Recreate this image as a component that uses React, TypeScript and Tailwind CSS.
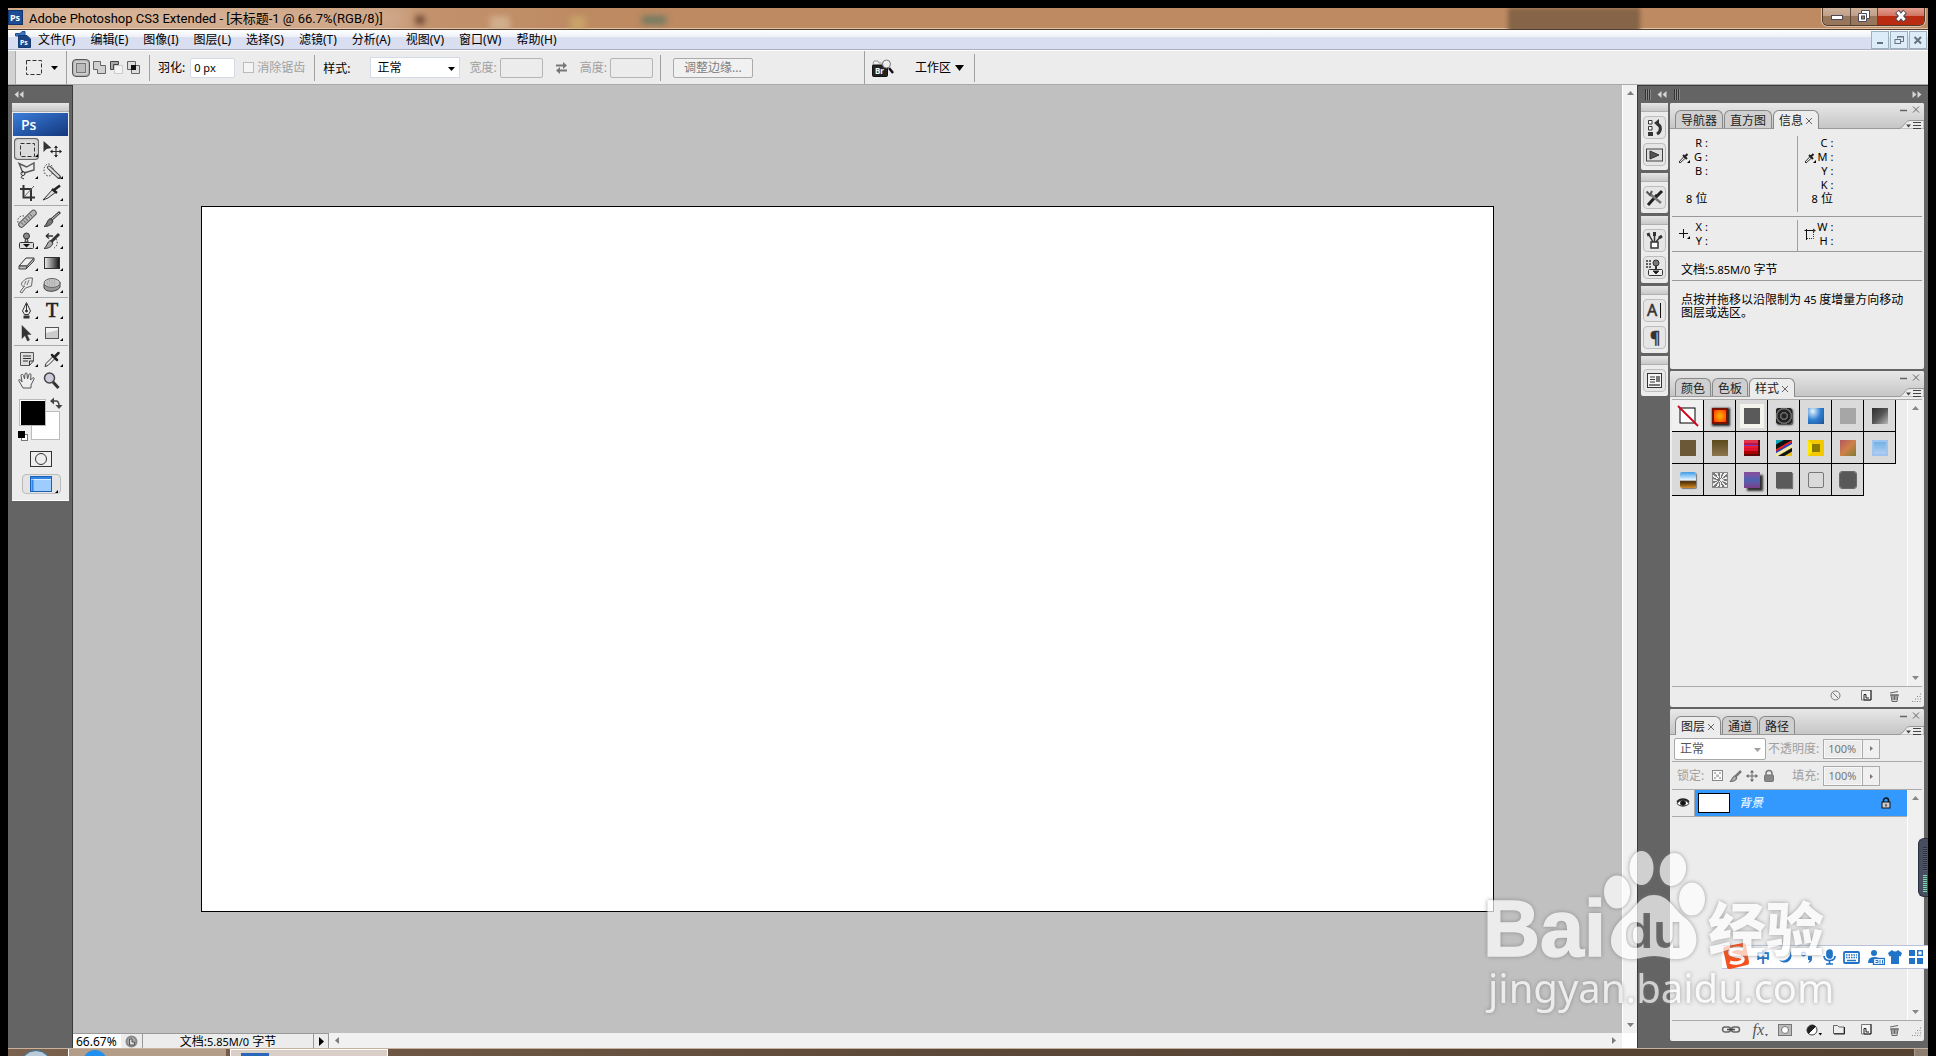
import React from 'react'
import clsx from 'clsx'

const menus = ['文件(F)', '编辑(E)', '图像(I)', '图层(L)', '选择(S)', '滤镜(T)', '分析(A)', '视图(V)', '窗口(W)', '帮助(H)']

type GlyphProps = { w: number, h: number, className?: string, children: React.ReactNode }

function Glyph({ w, h, className, children }: GlyphProps) {
  return (
    <svg width={w} height={h} viewBox={`0 0 ${w} ${h}`} className={clsx('shrink-0 overflow-visible', className)} fill="none" stroke="#333" aria-hidden="true">
      {children}
    </svg>
  )
}

function Triangle({ dir, className }: { dir: 'up' | 'down' | 'left' | 'right', className?: string }) {
  const paths = {
    up: 'M1 6L4.500 2L8 6Z',
    down: 'M1 3L4.500 7L8 3Z',
    left: 'M6 1L2 4.500L6 8Z',
    right: 'M3 1L7 4.500L3 8Z',
  }
  return (
    <svg width="9" height="9" viewBox="0 0 9 9" className={clsx('shrink-0', className)} fill="currentColor" aria-hidden="true">
      <path d={paths[dir]} />
    </svg>
  )
}

function Divider({ className }: { className?: string }) {
  return <span className={clsx('w-px shrink-0 bg-[#a0a0a0]', className)} />
}

/* ---------- title, menu and options bars ---------- */

function TitleBar() {
  return (
    <header className="relative flex h-[22px] shrink-0 items-center overflow-hidden border-b border-[#4e3d30] bg-gradient-to-r from-[#d2a888] via-[#bd8a62] via-30% to-[#bd8a62] shadow-[inset_0_-1px_0_#e3c3a6]">
      <span className="absolute top-1 left-4 h-3 w-96 bg-white/50 blur-md" />
      <span className="absolute top-2 left-[408px] h-2 w-2 bg-[#5f3a2a] blur-[3px]" />
      <span className="absolute top-2 left-[482px] h-4 w-5 bg-[#d6b795]/80 blur-[3px]" />
      <span className="absolute top-2 left-[562px] h-4 w-4 bg-[#d2b06d]/60 blur-[3px]" />
      <span className="absolute top-2 left-[634px] h-2 w-6 bg-[#6d7a62] blur-[3px]" />
      <span className="absolute top-0 right-72 h-6 w-[132px] bg-[#856447] blur-[2px]" />
      <svg className="relative mb-1 shrink-0" width="16" height="16" viewBox="0 0 16 16" aria-hidden="true">
        <rect x="0.500" y="1.500" width="14" height="14" fill="#1c4c96" stroke="#123468" />
        <text x="2" y="12" fontSize="9" fontWeight="700" fill="#fff" fontFamily="Noto Sans">Ps</text>
      </svg>
      <h1 className="relative ml-[5px] font-['Roboto','Noto_Sans_CJK_SC',sans-serif] text-[13px] leading-4 whitespace-nowrap">Adobe Photoshop CS3 Extended - [未标题-1 @ 66.7%(RGB/8)]</h1>
      <div className="relative mr-[3px] mb-[4px] ml-auto flex h-[18px] shrink-0 overflow-hidden rounded-b-md border border-t-0 border-[#4f3a2b] shadow-[0_0_0_1px_#dcc0a8]">
        <button aria-label="Minimize" className="flex w-7 items-center justify-center border-r border-[#5d4939] bg-gradient-to-b from-[#cdb19b] via-[#c0a088] via-45% to-[#97765c] to-50%">
          <Glyph w={14} h={12}><rect x="1.500" y="5.500" width="11" height="4" fill="#fff" stroke="#4a4a5a" /></Glyph>
        </button>
        <button aria-label="Restore" className="flex w-[27px] items-center justify-center border-r border-[#5d4939] bg-gradient-to-b from-[#cdb19b] via-[#c0a088] via-45% to-[#97765c] to-50%">
          <Glyph w={14} h={14}>
            <path d="M4.500 1.500H12.500V9.500H9.500V12.500H1.500V4.500H4.500Z" fill="#fff" stroke="#4a4a5a" />
            <rect x="4.500" y="7" width="3" height="3" fill="#9c7d65" stroke="#4a4a5a" />
            <path d="M5 4.500H9.500V9" stroke="#4a4a5a" />
          </Glyph>
        </button>
        <button aria-label="Close" className="flex w-[46px] items-center justify-center bg-gradient-to-b from-[#e2a090] via-[#d27462] via-45% to-[#b92c12] to-50%">
          <Glyph w={14} h={14}>
            <path d="M3 2.500L11 11.500M11 2.500L3 11.500" stroke="#4a4a5a" strokeWidth="5" />
            <path d="M3.500 3L10.500 11M10.500 3L3.500 11" stroke="#fff" strokeWidth="3" />
          </Glyph>
        </button>
      </div>
    </header>
  )
}

function MenuBar() {
  const box = 'flex h-[18px] w-[18px] items-center justify-center border border-[#9fb0bd] bg-[#dcecf8]'
  return (
    <nav className="flex h-5 shrink-0 items-center border-b border-[#a9b0c4] bg-gradient-to-b from-white via-[#eef1f8] via-35% to-[#d9dff0] to-40% pr-px pl-[7px]">
      <Glyph w={16} h={17}>
        <path d="M0.500 2.500H5L7 0.500H10V5H0.500Z" fill="#3f74bd" stroke="#1f4f97" />
        <path d="M3.500 4.500H12L15.500 8V16.500H3.500Z" fill="#1c4585" stroke="#173a70" />
        <text x="5" y="14" fontSize="7" fontWeight="700" fill="#fff" stroke="none" fontFamily="Noto Sans">Ps</text>
      </Glyph>
      <ul className="ml-[7px] flex gap-[15px] text-xs leading-4 whitespace-nowrap">
        {menus.map(m => <li key={m}><button>{m}</button></li>)}
      </ul>
      <div className="ml-auto flex gap-px">
        <button aria-label="Minimize document" className={box}>
          <Glyph w={10} h={10}><path d="M2 8H8" stroke="#66727d" strokeWidth="2" /></Glyph>
        </button>
        <button aria-label="Restore document" className={box}>
          <Glyph w={10} h={10}>
            <path d="M3.500 3.500V1.500H9.500V6.500H7M3 2H10" stroke="#66727d" />
            <rect x="1" y="4.500" width="5.500" height="4" stroke="#66727d" />
          </Glyph>
        </button>
        <button aria-label="Close document" className={box}>
          <Glyph w={10} h={10}><path d="M1.500 2L8 8.500M8 2L1.500 8.500" stroke="#66727d" strokeWidth="2" /></Glyph>
        </button>
      </div>
    </nav>
  )
}

function OptionsBar() {
  return (
    <div className="flex h-[35px] shrink-0 items-center border-t border-b border-t-white border-b-[#aaa] bg-[#ececec] text-xs leading-4 whitespace-nowrap">
      <span className="h-full w-2 border-r border-[#aaa] bg-[#d2d2d2]" />
      <button aria-label="Tool preset" className="ml-2 flex w-10 items-center gap-2 pl-[2px]">
        <Glyph w={16} h={15}><rect x="0.500" y="0.500" width="15" height="14" strokeDasharray="4 2" /></Glyph>
        <Triangle dir="down" />
      </button>
      <Divider className="ml-[2px] h-full" />
      <div className="ml-[5px] flex items-center">
        <button aria-label="New selection" className="flex h-[18px] w-[18px] items-center justify-center rounded border border-[#555] bg-[#cfcfcf] shadow-[inset_0_0_2px_#666]">
          <Glyph w={12} h={12}><rect x="1.500" y="1.500" width="9" height="9" fill="#bbb" stroke="#777" /></Glyph>
        </button>
        <button aria-label="Add to selection" className="ml-[2px]">
          <Glyph w={17} h={16}><path d="M1.500 1.500H8.500V5.500H13.500V13.500H5.500V9.500H1.500Z" fill="#d0d0d0" stroke="#666" /></Glyph>
        </button>
        <button aria-label="Subtract from selection">
          <Glyph w={17} h={16}>
            <rect x="5.500" y="5.500" width="8" height="8" fill="#f4f4f4" stroke="#ccc" />
            <path d="M1.500 9.500V1.500H9.500V4.500H4.500V9.500Z" fill="#aaa" stroke="#444" />
          </Glyph>
        </button>
        <button aria-label="Intersect with selection">
          <Glyph w={16} h={16}>
            <path d="M1.500 1.500H9.500V9.500H1.500ZM5.500 5.500H13.500V13.500H5.500Z" stroke="#666" fill="#ddd" />
            <rect x="5" y="5" width="5" height="5" fill="#111" stroke="none" />
          </Glyph>
        </button>
      </div>
      <Divider className="ml-[7px] h-[26px]" />
      <label htmlFor="feather" className="ml-2">羽化:</label>
      <input id="feather" defaultValue="0 px" className="ml-[5px] h-5 w-[45px] rounded-xs border border-[#d4dbe6] bg-white px-[3px] text-[11px]" />
      <label className="ml-2 flex items-center gap-[3px] text-[#a0a0a0]">
        <input type="checkbox" disabled className="h-[11px] w-[11px] appearance-none border border-[#bbb] bg-[#f4f4f4]" />
        消除锯齿
      </label>
      <Divider className="ml-[9px] h-[26px]" />
      <label htmlFor="style" className="ml-2 pt-[2px]">样式:</label>
      <div className="relative ml-5">
        <select id="style" className="block h-[21px] w-[90px] appearance-none border border-[#d4dbe6] bg-white pl-[6px] text-xs leading-4">
          <option>正常</option>
        </select>
        <Triangle dir="down" className="pointer-events-none absolute top-[7px] right-1" />
      </div>
      <label htmlFor="w" className="ml-[9px] text-[#a0a0a0]">宽度:</label>
      <input id="w" disabled className="ml-[3px] h-5 w-[43px] rounded-xs border border-[#b5b5b5] bg-[#ececec]" />
      <button aria-label="Swap width and height" className="ml-3">
        <Glyph w={13} h={12}>
          <path d="M1 3.500H9M4 8.500H12" stroke="#777" strokeWidth="2" />
          <path d="M8 0L12 3.500L8 7ZM5 5L1 8.500L5 12Z" fill="#777" stroke="none" />
        </Glyph>
      </button>
      <label htmlFor="h" className="ml-3 text-[#a0a0a0]">高度:</label>
      <input id="h" disabled className="ml-[3px] h-5 w-[43px] rounded-xs border border-[#b5b5b5] bg-[#ececec]" />
      <Divider className="ml-[7px] h-[26px]" />
      <button disabled className="ml-3 h-5 w-20 rounded-xs border border-[#aaa] bg-[#f1f1f1] text-[#808080]">调整边缘...</button>
      <Divider className="ml-[111px] h-full" />
      <button aria-label="Go to Bridge" className="ml-[7px]">
        <Glyph w={23} h={18}>
          <path d="M1 5L2 2H6L7 4H15V8H1Z" fill="#eee" stroke="#999" />
          <rect x="0.500" y="6" width="15" height="11.500" rx="1" fill="#222" stroke="#111" />
          <text x="3" y="15" fontSize="8" fontWeight="700" fill="#fff" stroke="none" fontFamily="Noto Sans">Br</text>
          <path d="M17 9L21 14" stroke="#111" strokeWidth="2.500" />
          <circle cx="14.500" cy="5" r="4" fill="#eee" stroke="#777" />
        </Glyph>
      </button>
      <button className="ml-5 flex items-center gap-[3px]">
        工作区
        <Glyph w={11} h={8}><path d="M1 1H10L5.500 7Z" fill="#000" stroke="none" /></Glyph>
      </button>
      <Divider className="ml-[9px] h-[28px]" />
    </div>
  )
}

/* ---------- tool box ---------- */

const tools: { name: string, art: React.ReactNode, flyout?: boolean, line?: boolean }[] = [
  { name: 'Marquee', flyout: true, art: <rect x="6.500" y="5.500" width="14" height="13" strokeDasharray="4 2" /> },
  {
    name: 'Move',
    art: (
      <>
        <path d="M4.500 3V14L7.500 11L12.500 10Z" fill="#333" stroke="none" />
        <path d="M12 13.500H22M17 8.500V18.500" strokeWidth="1.200" />
        <path d="M17 7.500L19 10H15ZM17 19.500L19 17H15ZM11 13.500L13.500 11.500V15.500ZM23 13.500L20.500 11.500V15.500Z" fill="#222" stroke="none" />
      </>
    ),
  },
  { name: 'Lasso', flyout: true, art: <><path d="M9 13L5 3.500L12.500 7L20 3V10L10 13" stroke="#555" strokeWidth="1.400" /><circle cx="9" cy="13.500" r="2" /><path d="M9 15L7 17.500L10 19" /></> },
  {
    name: 'Quick selection',
    flyout: true,
    art: (
      <>
        <ellipse cx="9.500" cy="10" rx="4.500" ry="6" strokeDasharray="1.500 1.500" />
        <path d="M10 7.500L20 17" stroke="#444" strokeWidth="4" strokeLinecap="round" />
        <path d="M10 7.500L19.500 16.500" stroke="#ddd" strokeWidth="2" strokeLinecap="round" />
      </>
    ),
  },
  { name: 'Crop', art: <><path d="M9.500 3V15.500H21M6 7H17V19" strokeWidth="2" /><path d="M10 15L20 4" stroke="#666" /></> },
  { name: 'Slice', flyout: true, art: <><path d="M4 18L14 7L17 10L9 16Z" fill="#ddd" /><path d="M13 7L18 11M15 8L21 3.500" stroke="#222" strokeWidth="2.500" /></> },
  {
    name: 'Healing brush',
    flyout: true,
    line: true,
    art: (
      <>
        <path d="M10 8A5 5 0 0 0 6 17" strokeDasharray="1.500 1.500" />
        <path d="M7.500 16.500L19.500 5" stroke="#555" strokeWidth="6.500" strokeLinecap="round" />
        <path d="M7.500 16.500L19.500 5" stroke="#bbb" strokeWidth="4.500" strokeLinecap="round" />
        <path d="M8 16L19 5.500" stroke="#666" strokeWidth="3" strokeDasharray="1 2" />
      </>
    ),
  },
  { name: 'Brush', flyout: true, art: <><path d="M12 12L21 4" strokeWidth="3" stroke="#444" /><path d="M12.500 11.500L20 5" stroke="#ccc" /><path d="M5 18.500C8 17 8 12 11 10.500L14 13C13 17 9 18.500 5 18.500Z" fill="#777" /></> },
  {
    name: 'Clone stamp',
    flyout: true,
    art: (
      <>
        <circle cx="12.500" cy="6" r="3" fill="#888" />
        <path d="M11.500 9L11 12H14L13.500 9Z" fill="#ccc" />
        <rect x="5.500" y="12.500" width="14" height="6" rx="1" fill="#ddd" />
        <path d="M9 14H16L12.500 17.500Z" fill="#111" stroke="none" />
      </>
    ),
  },
  { name: 'History brush', flyout: true, art: <><path d="M12 12L20 4" strokeWidth="3" /><path d="M5 18.500C8 17 8 12 11 10.500L14 13C13 17 9 18.500 5 18.500Z" fill="#aaa" /><path d="M17 9A6 6 0 0 1 15 18" strokeDasharray="1.500 1.500" /><path d="M7 6H14M7 6L10 3.500M7 6L10 8.500" strokeWidth="1.300" /></> },
  { name: 'Eraser', flyout: true, art: <><path d="M5 14L12 6H20L13 14Z" fill="#eee" /><path d="M5 14V17H12L20 9V6L13 14H5M13 14L12 17" fill="#bbb" stroke="#444" /></> },
  { name: 'Gradient', flyout: true, art: <rect x="5.500" y="5.500" width="15" height="11" fill="url(#toolGradient)" /> },
  { name: 'Smudge', flyout: true, art: <><path d="M6 18L10.500 12C7 13 6.500 9 9 7.500C11 4.500 15 3.500 18.500 4L17.500 12L11.500 14L8 19Z" fill="#e8e8e8" stroke="#666" /><path d="M12 7L10.500 10.500M15 6L13 11" stroke="#777" /></> },
  { name: 'Sponge', flyout: true, art: <><path d="M5 10V14C7 19 19 18 21 13V8Z" fill="#999" stroke="#444" /><ellipse cx="13" cy="9" rx="8" ry="4.500" fill="#c4c4c4" stroke="#666" /><path d="M8 9H18M10 7H16M10 11H16" stroke="#999" strokeDasharray="1 1.500" /></> },
  { name: 'Pen', flyout: true, line: true, art: <><path d="M12.500 2.500L16.500 11L14.500 14.500H10.500L8.500 11Z" fill="#eee" /><path d="M12.500 4V11" /><circle cx="12.500" cy="11" r="1" fill="#222" /><path d="M9.500 17H15.500" strokeWidth="3" /></> },
  { name: 'Type', flyout: true, art: <text x="7" y="17" fontSize="20" fontFamily="Liberation Serif" fill="#222" stroke="#222" strokeWidth="0.600">T</text> },
  { name: 'Path selection', flyout: true, art: <path d="M8 3.500V16.500L11 13.500L13.500 19L15.500 18L13 12.500H17Z" fill="#333" stroke="#333" strokeWidth="0.500" /> },
  { name: 'Rectangle', flyout: true, art: <><rect x="6.500" y="5.500" width="13" height="11" fill="#ccc" stroke="#555" /><path d="M7 16V11L19 8V6H7Z" fill="#f3f3f3" stroke="none" /></> },
  { name: 'Notes', flyout: true, line: true, art: <><path d="M6.500 4.500H19.500V13L15.500 17.500H6.500Z" fill="#ddd" stroke="#555" /><path d="M9 8H17M9 10.500H17M9 13H14" /><path d="M19.500 13H15.500V17.500" /></> },
  { name: 'Eyedropper', flyout: true, art: <><path d="M6 18.500L7 15.500L14 8.500L16 10.500L9 17.500Z" fill="#eee" /><path d="M13 7L18 12M15.500 9L19.500 5" stroke="#222" strokeWidth="2.500" strokeLinecap="round" /></> },
  { name: 'Hand', art: <path d="M9 18L5 11C4 9 6 9 7.500 11L8 12L7 5.500C7 4 9 4 9.500 5.500L10.500 9L11 4C11.500 2.500 13 2.500 13 4L13.500 9L15 4.500C15.500 3 17 3.500 17 5L16.500 10L18.500 8C19.500 7 20.500 8 20 9L17 15V18Z" fill="#eee" stroke="#555" /> },
  { name: 'Zoom', art: <><path d="M14 12L19.500 18" strokeWidth="3" stroke="#333" /><circle cx="10.500" cy="8" r="5" fill="#ccd" stroke="#444" strokeWidth="1.500" /></> },
]

const PanelGrip = () => <div className="h-[9px] shrink-0 border-b border-[#b0b0b0] bg-gradient-to-b from-[#e6e6e6] to-[#c8c8c8]" />

function ToolBox() {
  return (
    <aside className="flex w-[65px] shrink-0 flex-col border-t border-r border-[#3a3a3a] bg-[#646464] pr-[3px] pl-1">
      <div className="flex h-[17px] items-center pl-[2px]">
        <DoubleArrow />
      </div>
      <div className="flex flex-col rounded-t-xs border-b border-b-white bg-[#ececec] pb-[6px]">
        <PanelGrip />
        <div className="mx-px mt-px h-[23px] bg-gradient-to-br from-[#3b7edc] to-[#14377c] pl-2 font-[Open_Sans] text-sm leading-[23px] font-semibold text-white">Ps</div>
        <div className="mt-[2px] grid grid-cols-[25px_25px] pl-[2px]">
          <svg width="0" height="0" className="absolute">
            <linearGradient id="toolGradient"><stop stopColor="#eee" /><stop offset="1" stopColor="#111" /></linearGradient>
          </svg>
          {tools.map((t, i) => (
            <React.Fragment key={t.name}>
              {t.line && <span className="col-span-2 mt-px mb-[2px] h-px w-[54px] bg-[#aaa]" />}
              <button aria-label={t.name} title={t.name} className={clsx('h-[22px] w-[25px]', i === 0 && 'rounded bg-[#dcdcdc] shadow-[inset_0_0_0_1px_#666,inset_0_0_3px_#777]')}>
                <Glyph w={25} h={22}>
                  {t.art}
                  {t.flyout && <path d="M24 16V19H21Z" fill="#000" stroke="none" />}
                </Glyph>
              </button>
            </React.Fragment>
          ))}
        </div>
        <Glyph w={57} h={50} className="mt-px">
          <rect x="19.500" y="18.500" width="28" height="28" fill="#fff" stroke="#bbb" />
          <rect x="7.500" y="6.500" width="26" height="26" fill="#fff" stroke="#bbb" />
          <rect x="9" y="8" width="24" height="24" fill="#000" stroke="none" />
          <path d="M41 8H44Q47 8 47 13" stroke="#444" strokeWidth="1.500" />
          <path d="M38 8L42 4.500V11.500ZM47 16L43.500 12H50.500Z" fill="#444" stroke="none" />
          <rect x="9.500" y="41.500" width="6" height="6" fill="#fff" stroke="#777" />
          <rect x="6" y="38" width="7" height="7" fill="#000" stroke="none" />
        </Glyph>
        <button aria-label="Quick mask" className="mt-2 ml-[18px] w-[22px]">
          <Glyph w={22} h={16}><rect x="0.500" y="0.500" width="21" height="15" fill="#eee" /><circle cx="11" cy="8" r="5.500" /></Glyph>
        </button>
        <button aria-label="Screen mode" className="mt-[7px] ml-[10px] flex h-5 w-[39px] items-center justify-center rounded border border-[#bbb] bg-[#e4e4e4]">
          <Glyph w={30} h={18}>
            <rect x="3.500" y="1.500" width="21" height="15" fill="#9dccff" stroke="#1a62b8" />
            <path d="M4 3H24M5.500 5V16" stroke="#2f86e6" strokeWidth="2" />
            <path d="M7 4.500H24" stroke="#dcebff" />
            <path d="M31 15V18H28Z" fill="#000" stroke="none" />
          </Glyph>
        </button>
      </div>
    </aside>
  )
}

function DoubleArrow({ flip }: { flip?: boolean }) {
  return (
    <Glyph w={10} h={7} className={flip ? 'rotate-180' : ''}>
      <path d="M4.500 0V7L0.500 3.500ZM9.500 0V7L5.500 3.500Z" fill="#d6d6d6" stroke="none" />
    </Glyph>
  )
}

function Ribs() {
  return <Glyph w={6} h={11}><path d="M0.500 0V11M2.500 0V11M4.500 0V11" stroke="#333" /><path d="M1.500 0V11M3.500 0V11M5.500 0V11" stroke="#888" /></Glyph>
}

/* ---------- document ---------- */

function Workspace() {
  return (
    <main className="flex min-w-0 flex-1 flex-col">
      <div className="flex min-h-0 flex-1">
        <div className="flex flex-1 bg-[#c0c0c0] px-32 py-[121px]">
          <div className="flex-1 border border-black bg-white" />
        </div>
        <div className="flex w-[15px] flex-col items-center justify-between border-l border-white bg-[#f1f1f1] py-1 text-[#7d7d7d]">
          <Triangle dir="up" />
          <Triangle dir="down" />
        </div>
      </div>
      <footer className="flex h-[15px] shrink-0 bg-white pr-[15px] text-xs leading-[15px]">
        <input aria-label="Zoom" defaultValue="66.67%" className="w-12 border-t border-[#999] bg-white pl-[3px]" />
        <span className="flex w-[22px] items-center justify-center border-t border-r border-[#999] bg-[#ececec]">
          <Glyph w={13} h={13}><circle cx="6.500" cy="6.500" r="5" fill="#aaa" stroke="#888" strokeWidth="2" /><path d="M4.500 4V10H9.500V7H7V4Z" fill="#ddd" stroke="#555" /></Glyph>
        </span>
        <span className="w-[171px] border-t border-r border-[#999] bg-[#ececec] text-center">
          文档:
          <span className="text-[11px]">5.85M/0</span>
          {' 字节'}
        </span>
        <button aria-label="Status options" className="flex w-[15px] items-center justify-center border-t border-r border-[#999] bg-[#ececec]">
          <Glyph w={6} h={9}><path d="M1 0V9L6 4.500Z" fill="#000" stroke="none" /></Glyph>
        </button>
        <div className="flex flex-1 items-center justify-between bg-[#f1f1f1] px-1 text-[#7d7d7d]">
          <Triangle dir="left" />
          <Triangle dir="right" />
        </div>
      </footer>
    </main>
  )
}

/* ---------- right dock ---------- */

function DockButton({ name, children }: { name: string, children: React.ReactNode }) {
  return (
    <button aria-label={name} className="flex h-[23px] w-[23px] items-center justify-center rounded border border-[#bdbdbd] bg-[#e6e6e6]">
      <Glyph w={19} h={19}>{children}</Glyph>
    </button>
  )
}

function DockGroup({ children }: { children: React.ReactNode }) {
  return (
    <div className="rounded-xs bg-[#ececec]">
      <PanelGrip />
      <div className="flex flex-col items-center gap-1 py-1">{children}</div>
    </div>
  )
}

function IconDock() {
  return (
    <div className="flex w-[27px] shrink-0 flex-col gap-[3px]">
      <DockGroup>
        <DockButton name="History">
          <path d="M3.500 2.500H7V6H3.500ZM3.500 8.500H7V12H3.500ZM3.500 14.500H7V17.500H3.500Z" fill="#fff" />
          <rect x="3" y="14" width="5" height="4" fill="#333" stroke="none" />
          <path d="M12 16C17 13 16 7 12 6" strokeWidth="3" />
          <path d="M9 5L14 1V9Z" fill="#333" stroke="none" />
        </DockButton>
        <DockButton name="Actions">
          <rect x="1.500" y="4" width="16" height="12" fill="#ddd" stroke="#444" />
          <path d="M5 6L14 10L5 14Z" fill="#555" />
        </DockButton>
      </DockGroup>
      <DockGroup>
        <DockButton name="Tool presets">
          <path d="M3 17L12 7M10 10L17 3" strokeWidth="3" stroke="#222" />
          <path d="M5 6L16 15" strokeWidth="2.500" stroke="#777" />
          <path d="M1.500 3.500L5 7L7 3" strokeWidth="2" stroke="#555" />
        </DockButton>
      </DockGroup>
      <DockGroup>
        <DockButton name="Brushes">
          <rect x="6" y="11" width="7" height="6" fill="#fff" strokeWidth="1.500" />
          <path d="M8 11L4 4M9.500 11V3M11 11L15 6" strokeWidth="1.500" />
          <path d="M4 5L3 2M9.500 5V1M14 7L17 5" strokeWidth="3" />
        </DockButton>
        <DockButton name="Clone source">
          <circle cx="11" cy="5" r="3" fill="#777" />
          <path d="M11 8V12" strokeWidth="2" />
          <rect x="3.500" y="11.500" width="14" height="6" rx="1" fill="#eee" />
          <path d="M8 13H14L11 16Z" fill="#111" />
          <path d="M1 3H7M1 6H7M1 9H7" strokeWidth="1.500" strokeDasharray="2 1" />
        </DockButton>
      </DockGroup>
      <DockGroup>
        <DockButton name="Character">
          <text x="2" y="15" fontSize="16" fontFamily="Noto Sans" fill="#333" strokeWidth="0.500">A</text>
          <path d="M15.500 2V17" stroke="#111" />
        </DockButton>
        <DockButton name="Paragraph">
          <text x="5" y="15" fontSize="16" fontFamily="Noto Sans" fill="#333" strokeWidth="0.500">¶</text>
        </DockButton>
      </DockGroup>
      <DockGroup>
        <DockButton name="Layer comps">
          <rect x="2.500" y="2.500" width="14" height="14" fill="#f4f4f4" />
          <path d="M5 6H10M5 8.500H10M5 11H10" />
          <path d="M11 5H15V11H11ZM4 13H15V15H4Z" fill="#777" stroke="none" />
        </DockButton>
      </DockGroup>
    </div>
  )
}

function Panel({ tabs, active, className, children }: { tabs: string[], active: string, className?: string, children: React.ReactNode }) {
  return (
    <section className={clsx('flex flex-col overflow-hidden rounded-xs bg-[#ececec]', className)}>
      <div className="flex h-[26px] shrink-0 items-end border-b border-[#9a9a9a] bg-gradient-to-b from-[#e8e8e8] to-[#c6c6c6] pl-[5px]" role="tablist">
        {tabs.map(t => (
          <button
            key={t}
            role="tab"
            aria-selected={t === active}
            className={clsx(
              'mr-px flex items-center rounded-t-md border border-b-0 border-[#888] px-[5px] pt-[2px] text-xs leading-4 text-[#222]',
              t === active ? '-mb-px h-[19px] bg-[#ececec]' : 'h-[18px] bg-[#cfcfcf]',
            )}
          >
            {t}
            {t === active && <Glyph w={8} h={8} className="ml-[2px]"><path d="M1 1L7 7M7 1L1 7" stroke="#666" /></Glyph>}
          </button>
        ))}
        <svg width="25" height="26" viewBox="0 0 25 26" className="-mb-px ml-auto shrink-0" fill="none" stroke="#666" aria-hidden="true">
          <path d="M0 26Q4 24 7 19.500Q8 17.500 11 17.500H25V26Z" fill="#ececec" stroke="#999" />
          <path d="M1 7.500H8" strokeWidth="1.500" />
          <path d="M14 3.500L20 9.500M20 3.500L14 9.500" />
          <path d="M14 19.500H22M14 22.500H22M14 25.500H22" stroke="#444" />
          <path d="M7 21.500H12L9.500 24.500Z" fill="#444" stroke="none" />
        </svg>
      </div>
      {children}
    </section>
  )
}

const Dropper = () => (
  <Glyph w={12} h={12}>
    <path d="M1 10L6 4.500L7.500 6L2 11Z" fill="#eee" />
    <path d="M5 3L9 7M7 4.500L9.500 2" strokeWidth="2" stroke="#222" />
    <path d="M12 8V11H9Z" fill="#000" stroke="none" />
  </Glyph>
)

function Readout({ icon, letters, depth }: { icon: React.ReactNode, letters: string[], depth?: boolean }) {
  return (
    <div className="flex-1 pl-[6px] leading-[14px]">
      <div className="flex">
        <div className="w-3">{icon}</div>
        <div className={clsx('w-[18px] text-right text-[11px]', letters.length > 2 && 'h-14')}>
          {letters.map(l => (
            <div key={l}>
              {l}
              <span className="ml-[3px]">:</span>
            </div>
          ))}
        </div>
      </div>
      {depth && <div className="pl-2 text-xs leading-[14px]"><span className="text-[11px]">8</span> 位</div>}
    </div>
  )
}

function InfoPanel() {
  return (
    <Panel tabs={['导航器', '直方图', '信息']} active="信息" className="h-[266px] shrink-0">
      <div className="mx-[2px] flex h-[88px] border-b border-[#999] pt-[7px]">
        <Readout icon={<div className="pt-4"><Dropper /></div>} letters={['R', 'G', 'B']} depth />
        <Divider className="h-[76px]" />
        <Readout icon={<div className="pt-4"><Dropper /></div>} letters={['C', 'M', 'Y', 'K']} depth />
      </div>
      <div className="mx-[2px] flex h-[35px] border-b border-[#999] pt-[3px]">
        <Readout icon={<div className="pt-2"><Glyph w={12} h={12}><path d="M1 5.500H10M5.500 1V10" stroke="#111" /><path d="M12 8V11H9Z" fill="#000" stroke="none" /></Glyph></div>} letters={['X', 'Y']} />
        <Divider className="h-[31px]" />
        <Readout icon={<div className="pt-2"><Glyph w={12} h={12}><path d="M0.500 2.500H11M2.500 1V12" stroke="#111" /><path d="M3 10.500H9.500V3" stroke="#333" strokeDasharray="1 1" /><path d="M9 0.500L12 2.500L9 4.500Z" fill="#333" stroke="none" /></Glyph></div>} letters={['W', 'H']} />
      </div>
      <p className="mx-[2px] h-[29px] border-b border-[#999] pt-[11px] pl-[9px] text-xs leading-[14px]">
        文档:
        <span className="text-[11px]">5.85M/0</span>
        {' 字节'}
      </p>
      <p className="pt-3 pr-4 pl-[11px] text-xs leading-[13px]">
        点按并拖移以沿限制为
        <span className="text-[11px]"> 45 </span>
        度增量方向移动图层或选区。
      </p>
    </Panel>
  )
}

const swatches = [
  'none',
  'bg-radial from-[#ffb400] to-[#ff1e00] border-2 border-[#7a1000] shadow-[1px_1px_2px_1px_#222]',
  'bg-[#5a5a5a] outline-4 outline-[#f4f4ec]',
  'bg-[repeating-radial-gradient(#222_0_2px,#666_3px_4px)] shadow-[1px_1px_2px_#222] rounded-xs',
  'bg-radial-[at_30%_20%] from-[#e8f4ff] via-[#2f7fd0] to-[#1d4f92]',
  'bg-[#a6a6a6]',
  'bg-gradient-to-br from-[#2e2e2e] via-[#555] to-[#bbb]',
  'bg-[#6b5836]',
  'bg-gradient-to-b from-[#5c4a1c] to-[#8c7650]',
  'bg-[linear-gradient(#e0324a_20%,#c0104a_20%_35%,#7a3cc0_35%_45%,#f01830_45%_55%,#7a3cc0_55%_60%,#e01030_60%_80%,#a00_80%)] border-r-2 border-b-2 border-[#5a0808]',
  'bg-[linear-gradient(150deg,#0aa6b8_15%,#111_20%_35%,#d22_38%_45%,#2a3ec0_45%_50%,#f4e9a0_55%_65%,#111_70%_80%,#e8c020_85%)]',
  'bg-[#8a7a00] border-4 border-[#f2c800] border-l-[#ffe800]',
  'bg-gradient-to-br from-[#b4565e] via-[#cf8048] to-[#7c7a34]',
  'bg-gradient-to-b from-[#6fb3e6] to-[#b4cdf2] border-2 border-[#9cc4ee]',
  'bg-[linear-gradient(#3d9ce8,#e8f6ff_50%,#4a2c08_60%,#d08a20)] rounded-xs shadow-[1px_1px_1px_#777]',
  'bg-[repeating-conic-gradient(#eee_0_4%,#777_5%_9%)] border border-[#888]',
  'bg-gradient-to-b from-[#8a4a9c] via-[#4a62b0] to-[#7a3c8c] shadow-[3px_3px_2px_#333]',
  'bg-[#5a5a5a] shadow-[1px_1px_1px_#777]',
  'border border-[#777] rounded-xs',
  'bg-[#585858] rounded-xs outline outline-[#6a6a6a]',
]

function ScrollTrack() {
  return (
    <div className="flex w-[15px] shrink-0 flex-col items-center justify-between border-l border-white bg-[#f0f0f0] py-1 text-[#888]">
      <Triangle dir="up" />
      <Triangle dir="down" />
    </div>
  )
}

const NoIcon = () => <Glyph w={11} h={11}><circle cx="5.500" cy="5.500" r="4.500" stroke="#777" /><path d="M2.500 2.500L8.500 8.500" stroke="#777" /></Glyph>
const NewIcon = () => <Glyph w={11} h={11}><path d="M0.500 0.500H10V10H0.500Z" fill="#f4f4f4" stroke="#777" /><path d="M10 0V10H3M3 10V4.500L5 4.500V8H8" stroke="#222" /></Glyph>
const TrashIcon = () => <Glyph w={11} h={12}><path d="M2 5L3 11.500H8L9 5Z" fill="#ddd" stroke="#666" /><path d="M1 3L9 1.500M4 5.500V10M5.500 5.500V10M7 5.500V10M1 5H10" stroke="#666" /></Glyph>

const Grip = () => (
  <Glyph w={10} h={10}>
    <path d="M8 1H10M5 3.500H10M3 6H10M0 8.500H10" stroke="#888" strokeDasharray="1 1.500" />
  </Glyph>
)

function StylesPanel() {
  return (
    <Panel tabs={['颜色', '色板', '样式']} active="样式" className="h-[336px] shrink-0">
      <div className="mx-[2px] mt-[2px] flex min-h-0 flex-1 border-t border-b border-[#aaa]">
        <div className="flex flex-1 flex-wrap content-start">
          {swatches.map((s, i) => (
            <button key={i} aria-label={`Style ${i + 1}`} className={clsx('flex h-8 w-8 items-center justify-center border-r border-b border-black', i === 0 ? 'bg-[#f0f0f0]' : 'bg-[#dadada]')}>
              {s === 'none'
                ? (
                    <Glyph w={22} h={22}>
                      <rect x="3" y="3" width="15" height="15" fill="#fff" stroke="#000" />
                      <path d="M1 1L21 21" stroke="#d4001a" strokeWidth="1.800" />
                    </Glyph>
                  )
                : <span className={clsx('h-4 w-4', s)} />}
            </button>
          ))}
        </div>
        <ScrollTrack />
      </div>
      <div className="flex h-5 shrink-0 items-center justify-end pr-[2px] pb-[3px]">
        <button aria-label="Clear style"><NoIcon /></button>
        <button aria-label="New style" className="ml-5"><NewIcon /></button>
        <button aria-label="Delete style" className="ml-[17px]"><TrashIcon /></button>
        <span className="mt-1 ml-3"><Grip /></span>
      </div>
    </Panel>
  )
}

function Percent({ id }: { id: string }) {
  return (
    <div className="flex h-5 w-[57px] border border-[#aaa]">
      <input id={id} defaultValue="100%" className="w-[38px] border border-[#f8f8f8] bg-[#ececec] pl-[3px] text-[11px] text-[#777]" />
      <button aria-label="Adjust" className="flex flex-1 items-center justify-center border-l border-[#aaa] bg-[#f0f0f0] text-[#888]">
        <Glyph w={5} h={7}><path d="M1 1L4 3.500L1 6Z" fill="#777" stroke="none" /></Glyph>
      </button>
    </div>
  )
}

function LayersPanel() {
  return (
    <Panel tabs={['图层', '通道', '路径']} active="图层" className="min-h-0 flex-1">
      <div className="mx-[2px] flex h-[27px] shrink-0 items-center border-b border-[#aaa] pt-px pl-[2px] text-xs leading-4 text-[#a0a0a0]">
        <div className="relative">
          <select aria-label="Blend mode" className="block h-[22px] w-[92px] appearance-none rounded-xs border border-[#aaa] bg-white pl-[5px] text-xs text-[#555]">
            <option>正常</option>
          </select>
          <Triangle dir="down" className="pointer-events-none absolute top-[7px] right-1" />
        </div>
        <label htmlFor="opacity" className="mr-1 ml-[2px] whitespace-nowrap">不透明度:</label>
        <Percent id="opacity" />
      </div>
      <div className="mx-[2px] flex h-7 shrink-0 items-center border-b border-[#aaa] pt-px pl-[5px] text-xs leading-4 text-[#a0a0a0]">
        <span>锁定:</span>
        <button aria-label="Lock transparency" className="ml-2">
          <Glyph w={12} h={12}><rect x="0.500" y="0.500" width="10" height="10" fill="#fafafa" stroke="#888" /><path d="M2 2H4V4H2ZM7 2H9V4H7ZM4 4.500H7V7H4ZM2 7H4V9H2ZM7 7H9V9H7Z" fill="#bbb" stroke="none" /></Glyph>
        </button>
        <button aria-label="Lock pixels" className="ml-[5px]">
          <Glyph w={13} h={12}><path d="M6 7L12 1" strokeWidth="2.500" stroke="#777" /><path d="M1 11.500C3 10 3 7 5.500 6L8 8C7 11 4 11.500 1 11.500Z" fill="#aaa" stroke="#666" /></Glyph>
        </button>
        <button aria-label="Lock position" className="ml-1">
          <Glyph w={12} h={12}><path d="M1 6H11M6 1V11" stroke="#666" /><path d="M6 0L8 2.500H4ZM6 12L8 9.500H4ZM0 6L2.500 4V8ZM12 6L9.500 4V8Z" fill="#666" stroke="none" /></Glyph>
        </button>
        <button aria-label="Lock all" className="ml-[6px]">
          <Glyph w={10} h={12}><rect x="0.500" y="5" width="9" height="6.500" rx="1" fill="#888" stroke="#777" /><path d="M2 5V3.500A3 3 0 0 1 8 3.500V5" stroke="#777" strokeWidth="1.500" /></Glyph>
        </button>
        <label htmlFor="fill" className="mr-1 ml-[18px]">填充:</label>
        <Percent id="fill" />
      </div>
      <div className="mx-[2px] flex min-h-0 flex-1 border-b border-[#aaa]">
        <ul className="flex-1">
          <li className="flex h-[27px] items-stretch border-b border-[#aaa]">
            <button aria-label="Toggle visibility" className="flex w-[23px] items-center justify-center border-r border-[#aaa]">
              <Glyph w={14} h={12}>
                <path d="M1 6.500C4 2 10 2 13 6.500C10 10 4 10 1 6.500Z" fill="#fff" stroke="#222" />
                <circle cx="7" cy="6" r="2.500" fill="#111" />
                <path d="M1 5C4 1 10 1 13 5" strokeWidth="1.500" stroke="#222" />
              </Glyph>
            </button>
            <div className="flex flex-1 items-center bg-[#3399ff] pr-4 pl-[3px]">
              <span className="h-5 w-8 border border-black bg-white" />
              <span className="ml-[9px] text-xs leading-4 text-white italic">背景</span>
              <Glyph w={10} h={12} className="ml-auto"><rect x="1" y="5" width="8" height="6" fill="#ccc" stroke="#111" /><path d="M2.500 5V3.500A2.500 2.500 0 0 1 7.500 3.500V5" stroke="#111" strokeWidth="1.500" /><path d="M5 7V9.500" stroke="#111" /></Glyph>
            </div>
          </li>
        </ul>
        <ScrollTrack />
      </div>
      <div className="flex h-5 shrink-0 items-center justify-end pr-[2px] pb-[3px]">
        <button aria-label="Link layers">
          <Glyph w={18} h={10}><rect x="0.500" y="2" width="8" height="5" rx="2.500" stroke="#666" strokeWidth="1.500" /><rect x="9.500" y="2" width="8" height="5" rx="2.500" stroke="#666" strokeWidth="1.500" /><path d="M5 4.500H13" stroke="#444" strokeWidth="1.500" /></Glyph>
        </button>
        <button aria-label="Layer style" className="ml-3 flex items-end font-[Liberation_Serif] text-base leading-[14px] text-[#555] italic">
          fx
          <Glyph w={5} h={4}><path d="M1 1H4L2.500 3.500Z" fill="#666" stroke="none" /></Glyph>
        </button>
        <button aria-label="Add mask" className="ml-[9px]">
          <Glyph w={14} h={12}><rect x="0.500" y="0.500" width="13" height="11" fill="#bbb" stroke="#777" /><circle cx="7" cy="6" r="3.500" fill="#fff" stroke="#777" /></Glyph>
        </button>
        <button aria-label="Adjustment layer" className="ml-[14px]">
          <Glyph w={16} h={12}><circle cx="6" cy="6" r="5" fill="#fff" stroke="#444" /><path d="M2.500 9.500A5 5 0 0 1 9.500 2.500Z" fill="#222" stroke="#222" /><path d="M12.500 9H16L14.500 11.500Z" fill="#000" stroke="none" /></Glyph>
        </button>
        <button aria-label="New group" className="ml-[11px]">
          <Glyph w={12} h={11}><path d="M0.500 9.500V1.500H4.500L6 3H11V9.500Z" fill="#eee" stroke="#666" /><path d="M11.500 3V10H1" stroke="#222" /></Glyph>
        </button>
        <button aria-label="New layer" className="ml-4"><NewIcon /></button>
        <button aria-label="Delete layer" className="ml-[17px]"><TrashIcon /></button>
        <span className="mt-1 ml-3"><Grip /></span>
      </div>
    </Panel>
  )
}

function RightDock() {
  return (
    <aside className="flex w-[291px] shrink-0 flex-col border-t border-l border-[#3a3a3a] bg-[#646464] pr-1 pb-[7px] pl-[3px]">
      <div className="flex h-[17px] shrink-0 items-center pl-1">
        <Ribs />
        <span className="ml-[6px]"><DoubleArrow /></span>
        <span className="ml-[7px]"><Ribs /></span>
        <span className="mr-[2px] ml-auto"><DoubleArrow flip /></span>
      </div>
      <div className="flex min-h-0 flex-1 gap-[2px]">
        <IconDock />
        <div className="flex min-w-0 flex-1 flex-col gap-[2px]">
          <InfoPanel />
          <StylesPanel />
          <LayersPanel />
        </div>
      </div>
    </aside>
  )
}

/* ---------- desktop extras ---------- */

function Taskbar() {
  return (
    <div className="flex h-2 shrink-0 overflow-hidden border-t border-[#c9b29d] bg-gradient-to-r from-[#7a614d] via-[#5c4838] to-[#54412f]">
      <span className="mt-px ml-3 h-8 w-8 shrink-0 rounded-full border border-[#2f6d96] bg-[#b9cbd8]" />
      <span className="ml-4 flex h-8 w-[158px] shrink-0 justify-start border-l border-white bg-[#b39c88] pl-[14px]">
        <span className="mt-px h-6 w-6 rounded-full bg-[#2090f0]" />
      </span>
      <span className="ml-1 h-8 w-[158px] shrink-0 border border-white bg-[#d9cfc7] pl-[10px]">
        <span className="mt-[3px] block h-6 w-7 bg-[#2c66b8]" />
      </span>
      <span className="mr-0 ml-auto h-8 w-[14px] border-l border-[#aa9a8a] bg-[#8d7e72]" />
    </div>
  )
}

function ImeBar() {
  return (
    <div className="absolute right-2 bottom-[87px] flex h-6 w-[206px] items-center border-y border-[#b9c2d8] bg-white pl-[34px] text-[#2173c8]">
      <svg width="30" height="30" viewBox="0 0 30 30" className="absolute -left-px" aria-hidden="true">
        <path d="M2 7Q2 5 4 4.500L22 1Q25 1 25 3L28 20Q28 23 26 23L9 27Q6 27 6 25Z" fill="#f4511e" />
        <path d="M22 7C16 5 8 7 9 11C10 15 22 13 22 17C22 21 14 22 9 20" fill="none" stroke="#fff" strokeWidth="3.500" />
      </svg>
      <span className="w-[14px] text-sm leading-5 font-bold">中</span>
      <svg width="14" height="14" viewBox="0 0 14 14" className="ml-[9px]" fill="currentColor" aria-hidden="true"><path d="M11 1A7 7 0 1 1 0 10A8 8 0 0 0 11 1Z" /></svg>
      <svg width="12" height="14" viewBox="0 0 12 14" className="ml-2" fill="currentColor" aria-hidden="true"><circle cx="2.500" cy="4" r="1.700" fill="none" stroke="currentColor" strokeWidth="1.500" /><path d="M7 6H11V9Q11 12 7 13Q9 11 8.500 10H7Z" /></svg>
      <svg width="13" height="16" viewBox="0 0 13 16" className="ml-[10px]" fill="none" stroke="currentColor" strokeWidth="1.700" aria-hidden="true"><rect x="4" y="1" width="5" height="8" rx="2.500" fill="currentColor" /><path d="M1 7Q1 11.500 6.500 11.500T12 7M6.500 12V15M3 15H10" /></svg>
      <svg width="17" height="13" viewBox="0 0 17 13" className="ml-[7px]" fill="none" stroke="currentColor" aria-hidden="true"><rect x="1" y="1" width="15" height="11" rx="1" strokeWidth="1.800" /><path d="M3 4H14M3 6.500H14" strokeWidth="1.500" strokeDasharray="1.500 1" /><path d="M4 9.500H13" strokeWidth="1.500" /></svg>
      <svg width="17" height="16" viewBox="0 0 17 16" className="ml-2" fill="currentColor" aria-hidden="true"><circle cx="6" cy="4" r="3" /><path d="M0 14Q0 8 6 8Q9 8 11 9H5V14Z" /><rect x="5.500" y="9.500" width="11" height="6" fill="#fff" stroke="currentColor" strokeWidth="1.300" /><path d="M7.500 11.500H10V13.500H7.500M12 11V14.500M14.500 11V14.500" fill="none" stroke="currentColor" /></svg>
      <svg width="14" height="14" viewBox="0 0 14 14" className="ml-[3px]" fill="currentColor" aria-hidden="true"><path d="M0 3L4 0Q7 3 10 0L14 3L12.500 6.500L11 6V14H3V6L1.500 6.500Z" /></svg>
      <svg width="14" height="14" viewBox="0 0 14 14" className="ml-[7px]" fill="currentColor" aria-hidden="true"><path d="M0 0H6V6H0ZM0 8H6V14H0ZM8 8H14V14H8Z" /><rect x="8.700" y="0.700" width="4.600" height="4.600" fill="none" stroke="currentColor" strokeWidth="1.400" /></svg>
    </div>
  )
}

function LevelWidget() {
  return (
    <div className="absolute right-2 bottom-[159px] h-[59px] w-[10px] rounded-l-md border border-r-0 border-[#2b3040] bg-[#474e60] pt-2 pl-1">
      <div className="h-6 w-1 bg-[repeating-linear-gradient(#2a2f3c_0_1px,#565d70_1px_2px)]" />
      <div className="mt-1 h-[18px] w-1 bg-[repeating-linear-gradient(#7fd6b0_0_1px,#3f5a5a_1px_2px)]" />
    </div>
  )
}

function Watermark() {
  return (
    <svg className="pointer-events-none absolute right-[90px] bottom-[30px] opacity-70 drop-shadow-[0_0_2px_#777]" width="366" height="186" viewBox="1480 840 366 186" fill="#fff" role="img" aria-label="Baidu">
      <mask id="du">
        <rect x="1480" y="840" width="366" height="186" fill="#fff" />
        <text x="1624" y="948" fontSize="48" fontWeight="700" fontFamily="Liberation Sans" fill="#000">du</text>
      </mask>
      <text x="1483" y="956" fontSize="79" fontWeight="700" fontFamily="Liberation Sans" stroke="#fff" strokeWidth="1.500">Bai</text>
      <ellipse cx="1617" cy="892" rx="13" ry="16.500" />
      <ellipse cx="1641.500" cy="868" rx="12" ry="17" />
      <ellipse cx="1673" cy="869.500" rx="13" ry="16.500" transform="rotate(12 1673 869)" />
      <ellipse cx="1692" cy="899" rx="13" ry="16.500" />
      <path mask="url(#du)" d="M1654 895C1668 895 1673 908 1684 917C1704 932 1698 957 1680 959C1670 960 1664 956 1654 956C1644 956 1638 960 1628 959C1606 955 1606 932 1624 917C1636 908 1640 895 1654 895Z" />
      <text x="1708" y="951" fontSize="58" fontWeight="900" fontFamily="Noto Sans CJK SC">经验</text>
      <text x="1488" y="1003" fontSize="40" fontFamily="Noto Sans">jingyan.baidu.com</text>
    </svg>
  )
}

export default function App() {
  return (
    <div className="relative flex h-screen min-h-[900px] flex-col overflow-hidden bg-black px-2 pt-2 font-['Noto_Sans','Noto_Sans_CJK_SC',sans-serif] text-black">
      <TitleBar />
      <MenuBar />
      <OptionsBar />
      <div className="flex min-h-0 flex-1">
        <ToolBox />
        <Workspace />
        <RightDock />
      </div>
      <Taskbar />
      <ImeBar />
      <LevelWidget />
      <Watermark />
    </div>
  )
}
